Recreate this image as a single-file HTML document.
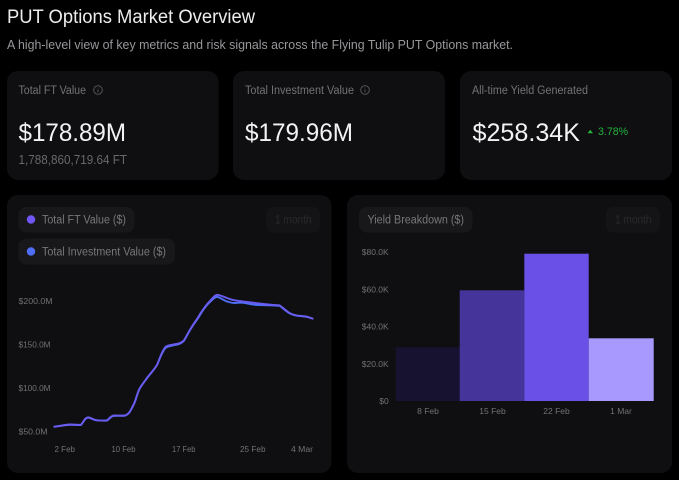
<!DOCTYPE html>
<html>
<head>
<meta charset="utf-8">
<style>
html,body{margin:0;padding:0;background:#000;width:679px;height:480px;overflow:hidden}
svg{display:block;font-family:"Liberation Sans",sans-serif;filter:blur(0.3px)}
</style>
</head>
<body>
<svg width="679" height="480" viewBox="0 0 679 480" xmlns="http://www.w3.org/2000/svg">
<rect width="679" height="480" fill="#000"/>
<text x="7" y="23" font-size="19" fill="#ececee" textLength="248" lengthAdjust="spacingAndGlyphs">PUT Options Market Overview</text>
<text x="7" y="49" font-size="13" fill="#98989c" textLength="506" lengthAdjust="spacingAndGlyphs">A high-level view of key metrics and risk signals across the Flying Tulip PUT Options market.</text>

<rect x="7" y="71" width="211.500" height="109" rx="11" fill="#0f0f11"/>
<rect x="233" y="71" width="212" height="109" rx="11" fill="#0f0f11"/>
<rect x="460" y="71" width="212" height="109" rx="11" fill="#0f0f11"/>

<text x="18.500" y="94" font-size="11.500" fill="#737377" textLength="67.500" lengthAdjust="spacingAndGlyphs">Total FT Value</text>
<g fill="none" stroke="#5c5c60" stroke-width="0.900"><circle cx="98" cy="90" r="4.300"/><path d="M98 89.500v2.800M98 87.600v.7"/></g>
<text x="18.500" y="141" font-size="25" fill="#f2f2f3" textLength="107.500" lengthAdjust="spacingAndGlyphs">$178.89M</text>
<text x="18.500" y="164" font-size="12.500" fill="#68686c" textLength="108.500" lengthAdjust="spacingAndGlyphs">1,788,860,719.64 FT</text>

<text x="245" y="94" font-size="11.500" fill="#737377" textLength="109" lengthAdjust="spacingAndGlyphs">Total Investment Value</text>
<g fill="none" stroke="#5c5c60" stroke-width="0.900"><circle cx="365" cy="90" r="4.300"/><path d="M365 89.500v2.800M365 87.600v.7"/></g>
<text x="245" y="141" font-size="25" fill="#f2f2f3" textLength="108" lengthAdjust="spacingAndGlyphs">$179.96M</text>

<text x="472" y="94" font-size="11.500" fill="#737377" textLength="116" lengthAdjust="spacingAndGlyphs">All-time Yield Generated</text>
<text x="472.500" y="141" font-size="25" fill="#f2f2f3" textLength="107.500" lengthAdjust="spacingAndGlyphs">$258.34K</text>
<path d="M587.500 133.200 L590.300 129.800 L593 133.200 Z" fill="#22b33c"/>
<text x="598" y="135" font-size="11" fill="#22b33c" textLength="30" lengthAdjust="spacingAndGlyphs">3.78%</text>

<rect x="7" y="195" width="324.500" height="278" rx="11" fill="#0f0f11"/>
<rect x="347" y="195" width="325" height="278" rx="11" fill="#0f0f11"/>

<rect x="18.500" y="207" width="116" height="25.500" rx="8" fill="#18181a"/>
<circle cx="31" cy="219.500" r="4.200" fill="#7257f7"/>
<text x="42" y="223.500" font-size="11.500" fill="#77777b" textLength="84" lengthAdjust="spacingAndGlyphs">Total FT Value ($)</text>
<rect x="18.500" y="238.500" width="156.500" height="26" rx="8" fill="#18181a"/>
<circle cx="31" cy="251.500" r="4.200" fill="#4e6ff5"/>
<text x="42" y="255.500" font-size="11.500" fill="#77777b" textLength="124" lengthAdjust="spacingAndGlyphs">Total Investment Value ($)</text>
<rect x="266" y="207" width="54" height="25.500" rx="7" fill="#141416"/>
<text x="275" y="223.500" font-size="11.500" fill="#2a2a2d" textLength="36.500" lengthAdjust="spacingAndGlyphs">1 month</text>

<g font-size="8.700" fill="#727276">
<text x="18.500" y="304" textLength="34" lengthAdjust="spacingAndGlyphs">$200.0M</text>
<text x="18.500" y="347.500" textLength="32" lengthAdjust="spacingAndGlyphs">$150.0M</text>
<text x="18.500" y="391" textLength="32" lengthAdjust="spacingAndGlyphs">$100.0M</text>
<text x="18.500" y="434.500" textLength="29" lengthAdjust="spacingAndGlyphs">$50.0M</text>
<text x="54.500" y="452" textLength="20.500" lengthAdjust="spacingAndGlyphs">2 Feb</text>
<text x="111.500" y="452" textLength="24" lengthAdjust="spacingAndGlyphs">10 Feb</text>
<text x="172" y="452" textLength="23.500" lengthAdjust="spacingAndGlyphs">17 Feb</text>
<text x="240" y="452" textLength="25.500" lengthAdjust="spacingAndGlyphs">25 Feb</text>
<text x="291" y="452" textLength="22" lengthAdjust="spacingAndGlyphs">4 Mar</text>
</g>

<path d="M54.300 426.700C58 426.300 65 425 70 424.800C74 424.700 79 425.300 81 425C83 423 85 417.700 88 417.700C91 417.700 93 420 97 420.300C100 420.600 104 420.800 107 420.600C109 419.500 111 416 114 415.900C118 415.700 122 416 125 415.700C127 415 129 413 130 411.500C132 408 134 404 135 401.500C137 396 138 391 140 388C143 383 145 381 147 378C150 374 154 370 157 365C159 361 162 351 166 347.500C169 346 172 346 175 345C178 344.500 182 343 184 340.700C187 336 189 331 192 327C195 322 198 319 200 315C203 310 206 306 209 303C212 300 214 297.500 217 296.800C221 297.800 224 300.500 227 301.500C230 302.500 232 303 235 303C240 302.500 243 302.500 247 303.500C251 304.500 255 305 259 305C265 305 272 305.500 279.500 305.800C283 308 286 311.500 290 313.500C293 315 295 315.500 298 315.900C302 316.200 305 316.300 308 317.200L312.600 318.500" fill="none" stroke="#4e6ff5" stroke-width="1.900" stroke-linejoin="round" stroke-linecap="round"/>
<path d="M54.300 426.700C58 426.300 65 424.700 70 424.500C74 424.500 79 425 81 424.800C83 423 85 417.300 88 417.300C91 417.300 93 420 97 420.300C100 420.600 104 420.800 107 420.300C109 419 111 415.500 114 415.500C118 415.500 122 415.800 125 415.500C127 415 129 413 130 411.500C132 408 134 404 135 401.500C137 396 138 391 140 388C143 383 145 381 147 378C150 374 154 370 157 365C159 361 162 350 166 346.500C169 345 172 345 175 344.200C178 343.700 182 342.500 184 340.200C187 335.500 189 331 192 326.500C195 321.500 198 318 200 314C203 309.500 206 305 209 302C212 299 214 295.300 217 294.800C221 295.200 224 297 227 298C230 299.300 232 299.800 235 300.300C240 301 243 301.500 247 302C251 302.600 255 303 259 303.400C265 304.200 272 304.800 279.500 305.300C283 307.500 286 311 290 313.300C293 314.700 295 315.300 298 315.700C302 316 305 316 308 317L312.600 318.600" fill="none" stroke="#6a5cf0" stroke-width="1.900" stroke-linejoin="round" stroke-linecap="round"/>

<rect x="359" y="207" width="113.500" height="25.500" rx="8" fill="#18181a"/>
<text x="367.500" y="223.500" font-size="11.500" fill="#77777b" textLength="96.500" lengthAdjust="spacingAndGlyphs">Yield Breakdown ($)</text>
<rect x="606" y="207" width="54" height="25.500" rx="7" fill="#141416"/>
<text x="615" y="223.500" font-size="11.500" fill="#2a2a2d" textLength="36.500" lengthAdjust="spacingAndGlyphs">1 month</text>

<rect x="395.700" y="347.300" width="64" height="53.700" fill="#17122f"/>
<rect x="459.700" y="290.300" width="64.600" height="110.700" fill="#45359a"/>
<rect x="524.300" y="253.700" width="64.400" height="147.300" fill="#6a50e6"/>
<rect x="588.700" y="338.300" width="65" height="62.700" fill="#a899ff"/>

<g font-size="8.500" fill="#727276" text-anchor="end">
<text x="388.700" y="255">$80.0K</text>
<text x="388.700" y="292.500">$60.0K</text>
<text x="388.700" y="329.500">$40.0K</text>
<text x="388.700" y="367">$20.0K</text>
<text x="388.700" y="404">$0</text>
</g>
<g font-size="8.500" fill="#727276" text-anchor="middle">
<text x="428" y="414">8 Feb</text>
<text x="492.500" y="414">15 Feb</text>
<text x="556.500" y="414">22 Feb</text>
<text x="621" y="414">1 Mar</text>
</g>
</svg>
</body>
</html>
